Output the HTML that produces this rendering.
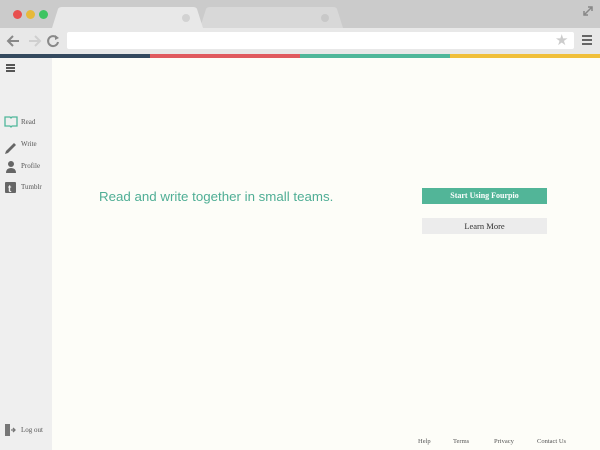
<!DOCTYPE html>
<html><head><style>
*{margin:0;padding:0;box-sizing:border-box}
body{width:600px;height:450px;overflow:hidden;background:#fdfdf8;font-family:"Liberation Serif",serif;position:relative}
.a{position:absolute}
</style></head><body>
<div class="a" style="left:0;top:0;width:600px;height:28px;background:#cbcbcb"></div>
<div class="a" style="left:13px;top:10px;width:9px;height:9px;border-radius:50%;background:#e8504f"></div>
<div class="a" style="left:26px;top:10px;width:9px;height:9px;border-radius:50%;background:#e7b93a"></div>
<div class="a" style="left:39px;top:10px;width:9px;height:9px;border-radius:50%;background:#3ec462"></div>
<svg class="a" style="left:0;top:0" width="600" height="30">
<path d="M200 28 L206 9 Q207 7 210 7 L333 7 Q336 7 337 9 L343 28Z" fill="#d8d8d8"/>
<path d="M52 28 L58 9 Q59 7 62 7 L193 7 Q196 7 197 9 L203 28Z" fill="#e8e8e8"/>
<circle cx="186" cy="18" r="4" fill="#d2d2d2"/><circle cx="325" cy="18" r="4" fill="#c8c8c8"/>
<path d="M584 15 L592 7 M588 7h4v4 M584 11v4h4" stroke="#888" stroke-width="1.5" fill="none"/>
</svg>
<div class="a" style="left:0;top:28px;width:600px;height:26px;background:#e8e8e8"></div>
<svg class="a" style="left:0;top:28px" width="70" height="26">
<path d="M19 13H8 M13 8l-5 5 5 5" stroke="#888" stroke-width="2" fill="none"/>
<path d="M29 13h11 M35 8l5 5-5 5" stroke="#cfcfcf" stroke-width="2" fill="none"/>
<path d="M57 10a5 5 0 1 0 1 4" stroke="#888" stroke-width="2" fill="none"/><path d="M55 7l4 3-4 2z" fill="#888"/>
</svg>
<div class="a" style="left:67px;top:32px;width:507px;height:17px;background:#fff;border-radius:2px"></div>
<div class="a" style="left:555px;top:31px;font-size:15px;color:#ccc;font-family:'DejaVu Sans'">★</div>
<div class="a" style="left:582px;top:35px;width:10px;height:2px;background:#666;box-shadow:0 4px #666,0 8px #666"></div>
<div class="a" style="left:0;top:54px;width:150px;height:4px;background:#34495e"></div>
<div class="a" style="left:150px;top:54px;width:150px;height:4px;background:#e05a5f"></div>
<div class="a" style="left:300px;top:54px;width:150px;height:4px;background:#4fb79a"></div>
<div class="a" style="left:450px;top:54px;width:150px;height:4px;background:#f0bf3a"></div>
<div class="a" style="left:0;top:58px;width:52px;height:392px;background:#efefef"></div>
<div class="a" style="left:6px;top:64px;width:9px;height:2px;background:#555;box-shadow:0 3px #555,0 6px #555"></div>
<svg class="a" style="left:4px;top:115px" width="14" height="80">
<path d="M1 2h5l1 1 1-1h5v9H8l-1 1-1-1H1z" fill="none" stroke="#4fb79a" stroke-width="1.3"/>
<path d="M2 36l8-8 2 2-8 8-3 1z" fill="#666"/>
<circle cx="7" cy="49" r="3" fill="#666"/><path d="M2 58q0-5 5-5t5 5z" fill="#666"/>
<rect x="1" y="67" width="11" height="11" rx="1" fill="#666"/><text x="4" y="77" font-size="10" fill="#efefef" font-family="Liberation Sans" font-weight="bold">t</text>
</svg>
<div class="a" style="left:21px;top:118px;font-size:7px;color:#555">Read</div>
<div class="a" style="left:21px;top:140px;font-size:7px;color:#555">Write</div>
<div class="a" style="left:21px;top:162px;font-size:7px;color:#555">Profile</div>
<div class="a" style="left:21px;top:183px;font-size:7px;color:#555">Tumblr</div>
<svg class="a" style="left:4px;top:423px" width="12" height="14"><path d="M1 1h5v12H1z" fill="#777"/><path d="M7 7h4 M9 5l2 2-2 2" stroke="#777" stroke-width="1.3" fill="none"/></svg>
<div class="a" style="left:21px;top:426px;font-size:7px;color:#555">Log out</div>
<div class="a" style="left:99px;top:189px;font-size:13.3px;color:#4fae95;font-family:'Liberation Sans',sans-serif">Read and write together in small teams.</div>
<div class="a" style="left:422px;top:188px;width:125px;height:16px;background:#52b598;color:#fff;font-size:8px;font-weight:bold;text-align:center;line-height:16px">Start Using Fourpio</div>
<div class="a" style="left:422px;top:218px;width:125px;height:16px;background:#ececec;color:#333;font-size:8.5px;text-align:center;line-height:16px">Learn More</div>
<div class="a" style="left:418px;top:438px;font-size:6.5px;color:#555">Help</div>
<div class="a" style="left:453px;top:438px;font-size:6.5px;color:#555">Terms</div>
<div class="a" style="left:494px;top:438px;font-size:6.5px;color:#555">Privacy</div>
<div class="a" style="left:537px;top:438px;font-size:6.5px;color:#555">Contact Us</div>
</body></html>
